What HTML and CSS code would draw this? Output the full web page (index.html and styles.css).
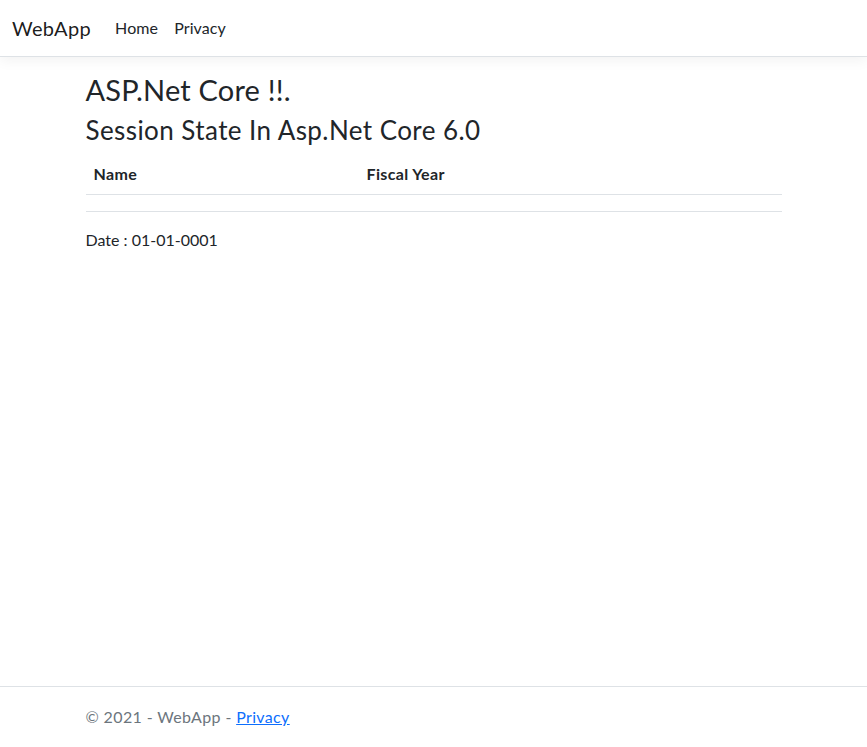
FILE: index.html
```html
<!DOCTYPE html>
<html lang="en">
<head>
<meta charset="utf-8">
<title>WebApp</title>
<link rel="stylesheet" href="styles.css">
</head>
<body>
<div class="page">
  <header class="navbar">
    <a class="brand" href="#">WebApp</a>
    <nav class="nav">
      <a class="nav-link" href="#">Home</a>
      <a class="nav-link" href="#">Privacy</a>
    </nav>
  </header>
  <main class="container main">
    <h1 class="title">ASP.Net Core !!.</h1>
    <h2 class="subtitle">Session State In Asp.Net Core 6.0</h2>
    <table class="table">
      <thead>
        <tr><th class="col-name">Name</th><th>Fiscal Year</th></tr>
      </thead>
      <tbody>
        <tr><td></td><td></td></tr>
      </tbody>
    </table>
    <p class="date">Date : 01-01-0001</p>
  </main>
  <footer class="footer">
    <div class="container">&copy; 2021 - WebApp - <a href="#" class="footer-link">Privacy</a></div>
  </footer>
</div>
</body>
</html>
```
FILE: styles.css
```css
* { box-sizing: border-box; }
html, body { margin: 0; padding: 0; }
body {
  font-family: Lato, "Noto Sans", sans-serif;
  font-size: 16px;
  line-height: 1.5;
  color: #212529;
  background: #fff;
}
.page {
  min-height: 100vh;
  display: flex;
  flex-direction: column;
}
.navbar {
  height: 57px;
  display: flex;
  align-items: center;
  padding: 0 12px;
  border-bottom: 1px solid #dee2e6;
  box-shadow: 0 4px 12px rgba(0,0,0,0.05);
  margin-bottom: 16px;
}
.brand {
  font-size: 20px;
  line-height: 30px;
  letter-spacing: 0.35px;
  color: rgba(0,0,0,0.9);
  text-decoration: none;
  margin-right: 16px;
}
.nav { display: flex; }
.nav-link {
  color: #212529;
  text-decoration: none;
  padding: 8px;
  line-height: 24px;
  letter-spacing: 0.1px;
}
.container {
  width: 720px;
  margin: 0 auto;
  padding: 0 12px;
}
.main { flex: 1; }
.title {
  font-weight: 400;
  font-size: 29px;
  line-height: 33.6px;
  letter-spacing: 0.2px;
  margin: 0 0 8px;
}
.subtitle {
  font-weight: 400;
  font-size: 26px;
  line-height: 31.2px;
  letter-spacing: 0.42px;
  margin: 0 0 8px;
}
.table {
  width: 100%;
  border-collapse: collapse;
  margin-bottom: 16px;
}
.table th, .table td {
  text-align: left;
  padding: 8px;
  border-bottom: 1px solid #dee2e6;
  line-height: 24px;
}
.table th { letter-spacing: 0.35px; }
.table td { height: 17px; line-height: 0; padding: 8px; }
.col-name { width: 273px; }
.date { margin: 0 0 16px; }
.footer {
  border-top: 1px solid #dee2e6;
  line-height: 60px;
  color: #6c757d;
  white-space: nowrap;
  letter-spacing: 0.36px;
}
.footer-link { color: #0d6efd; }
```
